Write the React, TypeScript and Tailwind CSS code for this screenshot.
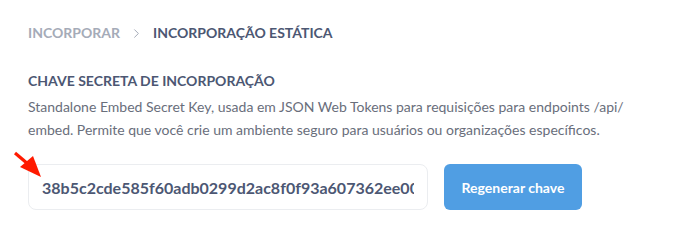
import { ChevronRight } from 'lucide-react'

export default function App() {
  const secret = '38b5c2cde585f60adb0299d2ac8f0f93a607362ee00f1c9b3a7de4f2c815b7a9'

  return (
    <div className="relative h-[243px] w-[700px] bg-white pl-[28px] pt-[23px] font-['Lato','Liberation_Sans',sans-serif]">
      <div className="flex items-center text-[14px] font-bold leading-5">
        <span className="text-[#a5abb8]">INCORPORAR</span>
        <ChevronRight className="mx-[9px] h-[15px] w-[15px] text-[#a5abb8]" strokeWidth={1.6} />
        <span className="text-[#4c5773]">INCORPORAÇÃO ESTÁTICA</span>
      </div>

      <h2 className="mt-[28px] text-[14px] font-bold leading-5 text-[#4c5773]">CHAVE SECRETA DE INCORPORAÇÃO</h2>
      <p className="mt-[4px] w-[640px] text-[14px] leading-[23px] text-[#696e7b]">
        Standalone Embed Secret Key, usada em JSON Web Tokens para requisições para endpoints /api/
        embed. Permite que você crie um ambiente seguro para usuários ou organizações específicos.
      </p>

      <div className="mt-[23px] flex items-center gap-4">
        <input
          readOnly
          value={secret}
          className="h-[46px] w-[400px] rounded-lg border border-[#ebedf0] bg-white px-[13px] text-[16px] font-bold text-[#4c5773] outline-none"
        />
        <button className="h-[46px] w-[138px] rounded-md bg-[#509ee3] text-[14px] font-bold text-white">
          Regenerar chave
        </button>
      </div>

      <svg className="absolute left-0 top-[148px]" width="50" height="35" viewBox="0 148 50 35">
        <line x1="15" y1="153" x2="28" y2="164" stroke="#ff1a00" strokeWidth="3.2" />
        <polygon points="20,167 33,156 41,177" fill="#ff1a00" />
      </svg>
    </div>
  )
}
